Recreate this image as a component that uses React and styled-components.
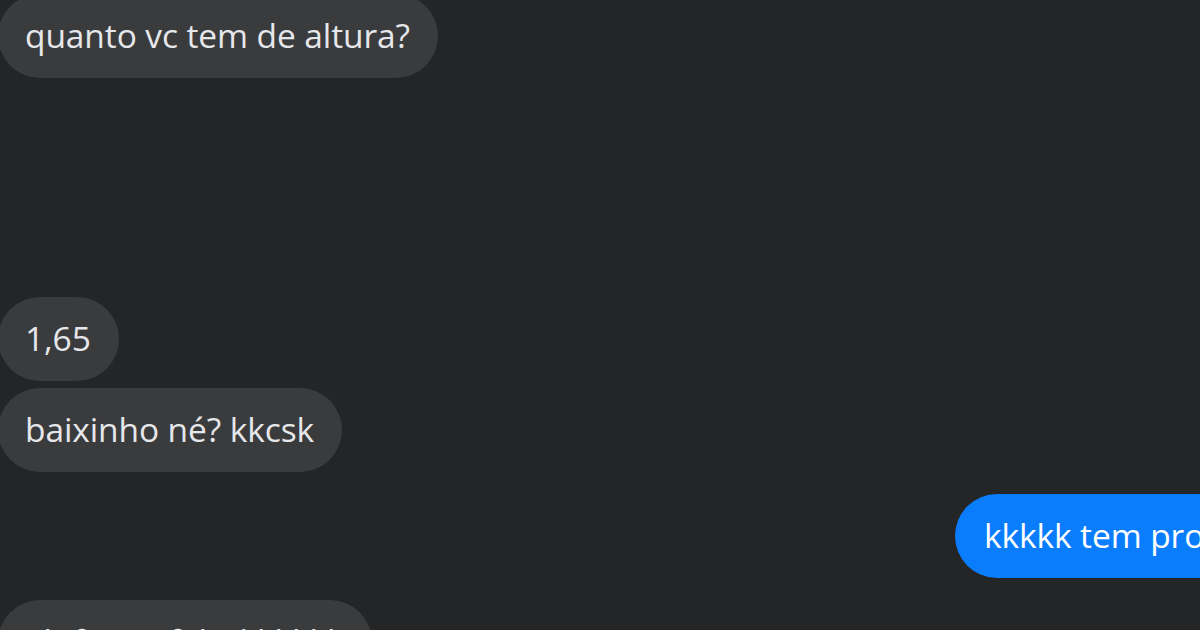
import styled, { createGlobalStyle } from "styled-components";

const Global = createGlobalStyle`
  html, body {
    margin: 0;
    padding: 0;
    background: #242527;
    overflow: hidden;
  }
  body {
    width: 1200px;
    height: 630px;
    font-family: "Open Sans", "Noto Sans", "Liberation Sans", sans-serif;
  }
`;

const Thread = styled.main`
  display: flex;
  flex-direction: column;
  margin-top: -6px;
  margin-left: -2px;
  width: 1202px;
  height: 636px;
  overflow: hidden;
`;

const Group = styled.section`
  display: flex;
  flex-direction: column;
  gap: 7px;
  margin-top: ${(p) => p.$top || 0}px;
  align-items: flex-start;
  padding-left: ${(p) => (p.$out ? 957 : 0)}px;
`;

const Bubble = styled.div`
  box-sizing: border-box;
  height: 84px;
  padding: 0 28px 2px 27px;
  border-radius: 42px;
  display: flex;
  align-items: center;
  white-space: nowrap;
  font-size: 33.5px;
  letter-spacing: -0.1px;
  color: ${(p) => (p.$out ? "#ffffff" : "#e6e7ea")};
  background: ${(p) => (p.$out ? "#0a7dfd" : "#3a3b3d")};
  padding-left: ${(p) => (p.$out ? 29 : 27)}px;
  padding-right: ${(p) => (p.$out ? 200 : 28)}px;
`;

export default function App() {
  return (
    <>
      <Global />
      <Thread>
        <Group>
          <Bubble>quanto vc tem de altura?</Bubble>
        </Group>
        <Group $top={219}>
          <Bubble>1,65</Bubble>
          <Bubble>baixinho né? kkcsk</Bubble>
        </Group>
        <Group $top={22} $out>
          <Bubble $out>kkkkk tem proporção</Bubble>
        </Group>
        <Group $top={22}>
          <Bubble>ah fiquei feliz kkkkkk</Bubble>
        </Group>
      </Thread>
    </>
  );
}
